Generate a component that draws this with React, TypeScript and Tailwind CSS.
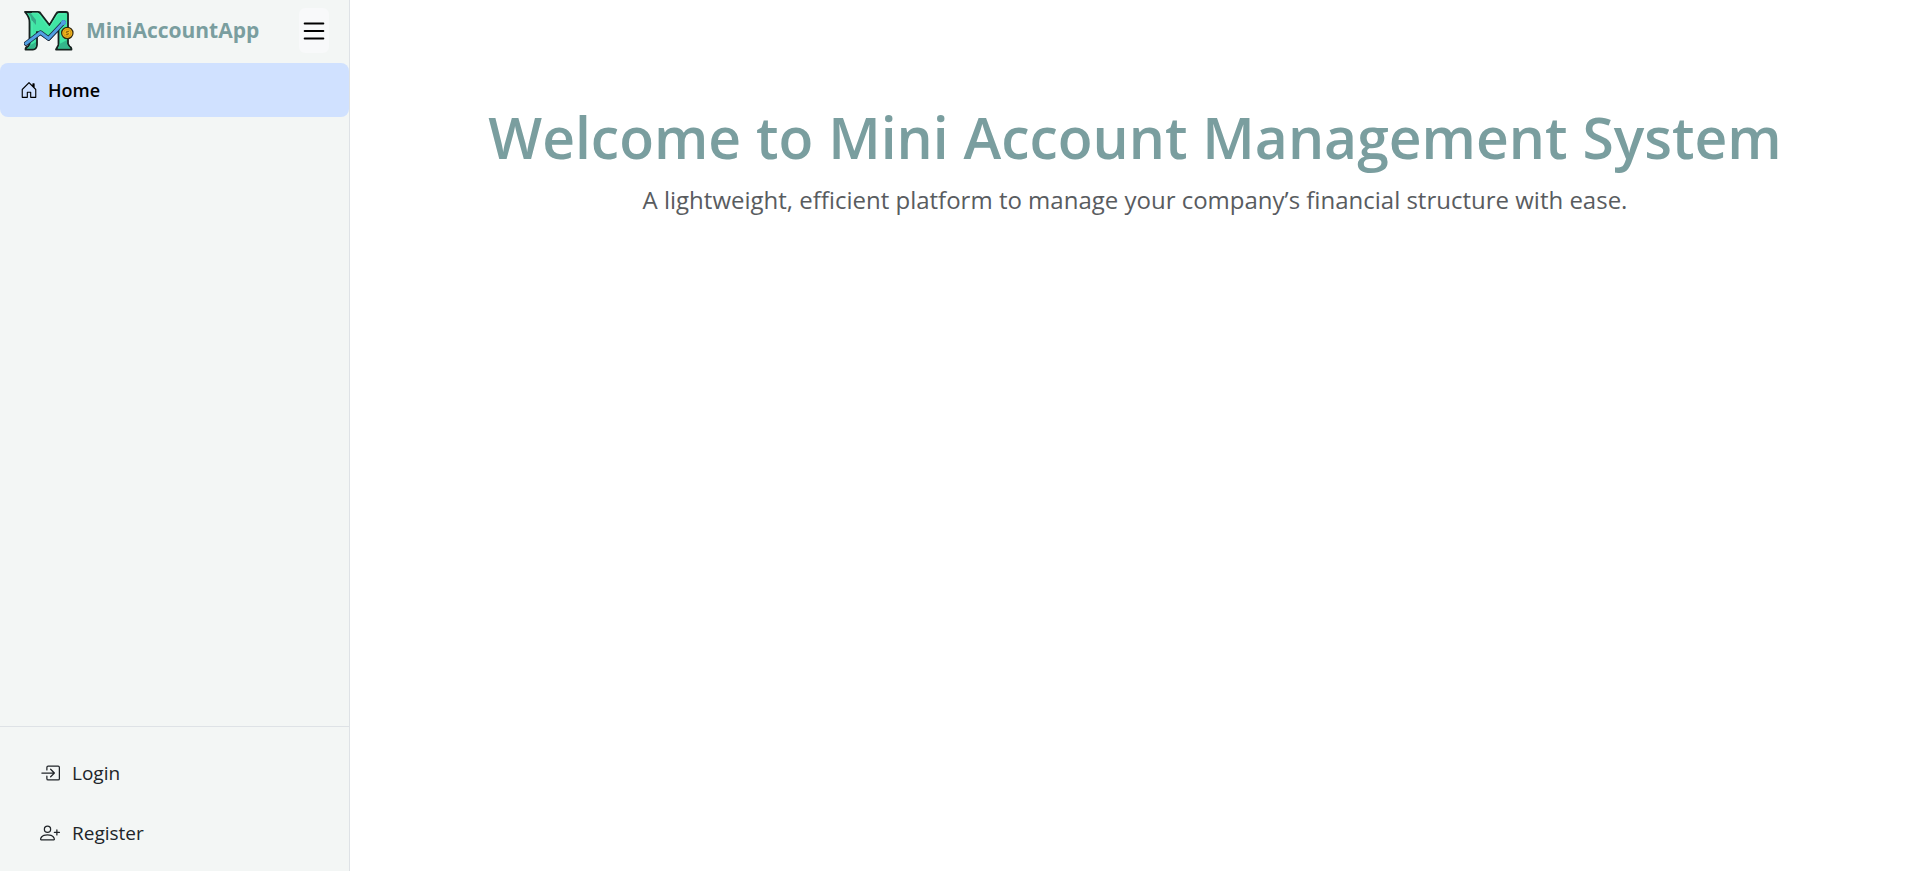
import React from "react";
import { BsBoxArrowInRight, BsHouseDoor, BsList, BsPersonPlus } from "react-icons/bs";

function Logo() {
  return (
    <svg className="h-10 w-[50px] shrink-0" viewBox="0 0 50 40" aria-hidden="true">
      <path
        d="M1 1H14Q16 1 17 3L25.500 14L32 3Q33 1 35 1H42Q44 1 44 3V33L45.500 35.500Q47.500 36 47.500 38.500H32L34.500 34V19L25 29L13 21V34Q12.500 38.500 9 38.500H1.500Q1.500 36 4 35.500L5.500 33V11Q5.500 6 1 1Z"
        fill="#40e5a4"
        stroke="#16211f"
        strokeWidth="1.800"
        strokeLinejoin="round"
      />
      <path d="M3 2Q7 4 7.500 9L12 14V9L6.500 2Z" fill="#36a988" />
      <path d="M6.500 34L12 31V33Q11.500 37.500 8 37.500H3L6 35Z M35.500 33L43 29V33L46 37.500H34L35.500 34Z" fill="#34b58b" />
      <path d="M8 10V27 M8 2H14L25 17L34 3H41" fill="none" stroke="#5beeb4" strokeWidth=".8" />
      <path d="M2 32.500L16.500 21.500L24.500 27.500L39.500 11.500" fill="none" stroke="#16243a" strokeWidth="4.600" strokeLinecap="round" strokeLinejoin="round" />
      <path d="M2 32.500L16.500 21.500L24.500 27.500L39.500 11.500" fill="none" stroke="#519fe2" strokeWidth="3" strokeLinecap="round" strokeLinejoin="round" />
      <circle cx="39.500" cy="11.500" r="2.500" fill="#519fe2" />
      <circle cx="43.300" cy="22" r="5.700" fill="#f4b71c" stroke="#33280f" strokeWidth="1.200" />
      <circle cx="43.300" cy="22" r="3.700" fill="none" stroke="#b8821a" strokeWidth=".6" />
      <path d="M45 20.400H42.700Q41.300 22 43.300 22Q45.300 22.300 44 23.700H41.800" fill="none" stroke="#6b4a0d" strokeWidth=".8" />
    </svg>
  );
}

export default function App() {
  return (
    <div className="flex min-h-screen bg-white font-['Open_Sans','Noto_Sans',sans-serif] text-[#212529]">
      <aside className="flex w-[350px] shrink-0 flex-col border-r border-[#dee2e6] bg-[#f3f6f5]">
        <header className="flex h-[63px] items-center justify-between pr-5 pb-0.5 pl-6">
          <a href="#home" className="flex items-center gap-3 text-[21px] font-bold text-[#7a9e9f]">
            <Logo />
            MiniAccountApp
          </a>
          <button
            type="button"
            aria-label="Toggle sidebar"
            className="flex h-[45px] w-[30px] items-center justify-center rounded-md bg-[#f8f9fa] text-black"
          >
            <BsList className="size-[30px] shrink-0" />
          </button>
        </header>
        <nav className="grow">
          <a
            href="#home"
            aria-current="page"
            className="flex h-[54px] items-center gap-2.5 rounded-lg bg-[#d0e1ff] px-5 text-lg font-semibold text-black"
          >
            <BsHouseDoor className="size-[18px]" />
            Home
          </a>
        </nav>
        <nav className="flex flex-col border-t border-[#dee2e6] px-10 pt-4 pb-2">
          <a href="#login" className="flex h-[60px] items-center gap-3 text-[19px]">
            <BsBoxArrowInRight className="size-5" />
            Login
          </a>
          <a href="#register" className="flex h-[60px] items-center gap-3 text-[19px]">
            <BsPersonPlus className="size-5" />
            Register
          </a>
        </nav>
      </aside>
      <main className="grow px-6 pt-[100px] text-center">
        <h1 className="text-[57px] leading-[74px] font-semibold text-[#7a9e9f]">
          Welcome to Mini Account Management System
        </h1>
        <p className="mt-2 text-2xl leading-9 text-[#595c5f]">
          A lightweight, efficient platform to manage your company’s financial structure with ease.
        </p>
      </main>
    </div>
  );
}
